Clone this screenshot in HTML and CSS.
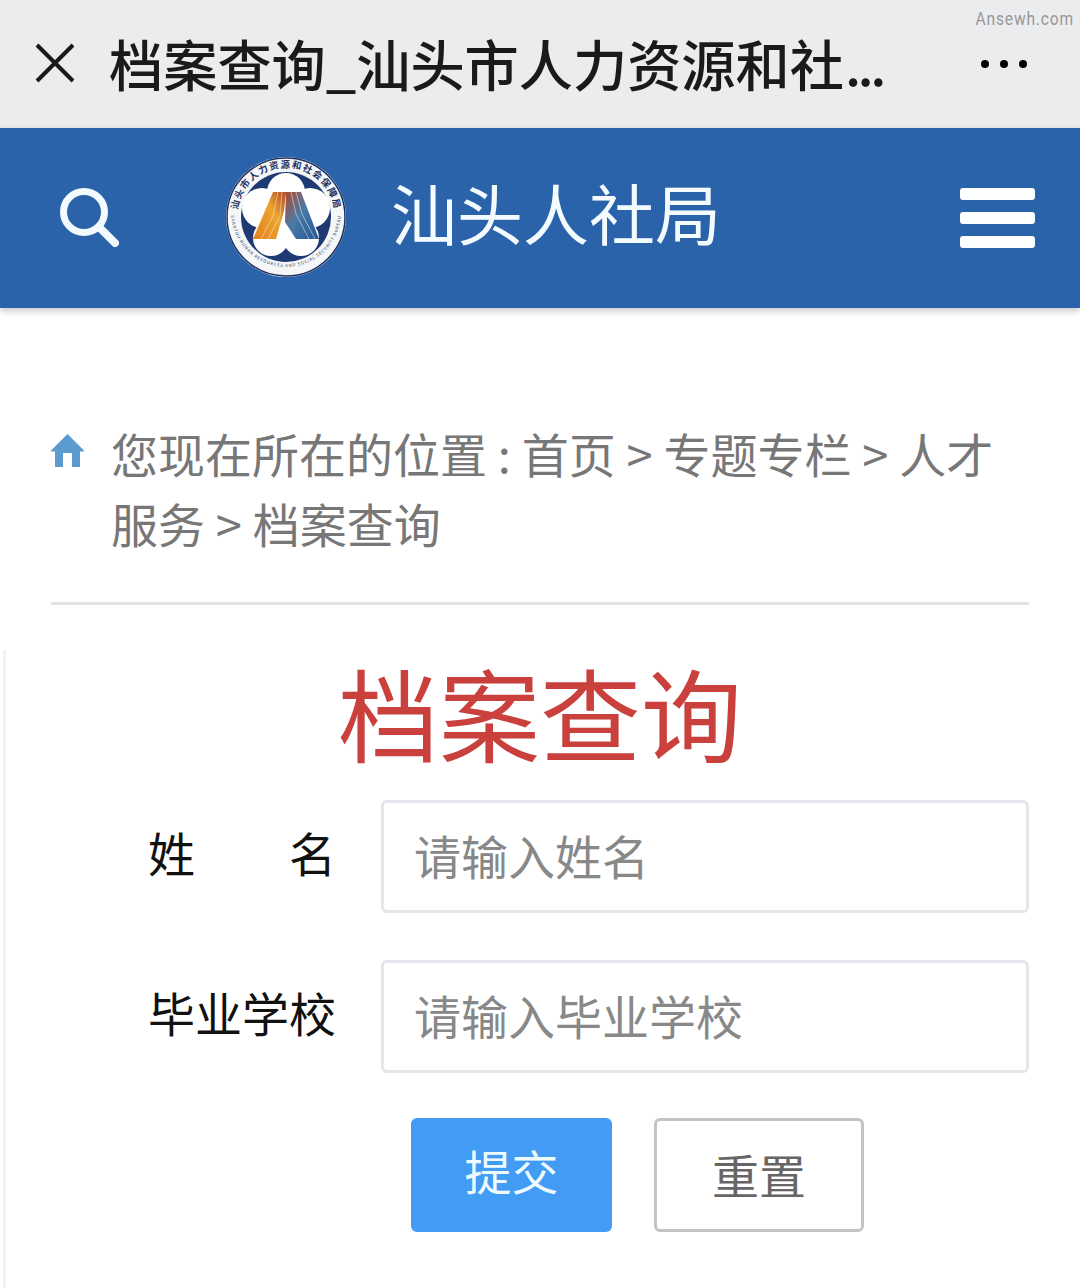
FILE: index.html
```html
<!DOCTYPE html>
<html lang="zh-CN">
<head>
<meta charset="utf-8">
<title>档案查询</title>
<link rel="stylesheet" href="styles.css">
</head>
<body>
<div class="wx-bar">
  <svg class="wx-close" width="40" height="40" viewBox="0 0 40 40"><path d="M2 2 L38 38 M38 2 L2 38" stroke="#1a1a1a" stroke-width="4" fill="none"/></svg>
  <div class="wx-title">档案查询_汕头市人力资源和社<span class="ell">...</span></div>
  <div class="wx-more"><i></i><i></i><i></i></div>
  <div class="watermark">Ansewh.com</div>
</div>
<header class="site-head">
  <svg class="search" width="60" height="60" viewBox="0 0 60 60"><circle cx="25" cy="25" r="20.5" stroke="#f4fbff" stroke-width="7" fill="none"/><path d="M41 41 L56 56" stroke="#f4fbff" stroke-width="8" stroke-linecap="round"/></svg>
  <div class="brand">
    <svg class="logo" width="122" height="122" viewBox="0 0 122 122">
      <defs>
        <path id="arcTop" d="M14 72 A48.5 48.5 0 1 1 108 72"/>
        <path id="arcBot" d="M6 56 A55 55 0 0 0 116 56"/>
        <linearGradient id="lg" x1="0" y1="1" x2="1" y2="0"><stop offset="0" stop-color="#e2811d"/><stop offset=".6" stop-color="#eba52f"/><stop offset="1" stop-color="#b24a2a"/></linearGradient>
        <linearGradient id="rg" x1="0" y1="0" x2="1" y2="1"><stop offset="0" stop-color="#b24a2a"/><stop offset=".45" stop-color="#4a7aa8"/><stop offset="1" stop-color="#245592"/></linearGradient>
      </defs>
      <circle cx="61" cy="61" r="60" fill="#f4f6f8"/>
      <circle cx="61" cy="61" r="59" fill="none" stroke="#1d2f5c" stroke-width="1.5"/>
      <circle cx="61" cy="61" r="45" fill="#1f3a72"/>
      <g fill="#fff">
        <circle cx="61" cy="61" r="27"/>
        <circle cx="61" cy="36" r="19"/>
        <circle cx="37" cy="52" r="20"/>
        <circle cx="85" cy="52" r="20"/>
        <circle cx="46" cy="82" r="18"/>
        <circle cx="76" cy="82" r="18"/>
      </g>
      <path d="M48 36 L61 36 L59 55 L51 83 L28 83 Z" fill="url(#lg)"/>
      <path d="M61 36 L76 36 L94 83 L71 83 L60 66 Z" fill="url(#rg)"/>
      <path d="M53 36 L48 60 L36 83 M57 36 L55 60 L43 83" stroke="#fff" stroke-width=".8" fill="none" opacity=".55"/>
      <path d="M66 36 L71 58 L84 83 M71 36 L77 58 L90 83" stroke="#fff" stroke-width=".8" fill="none" opacity=".6"/>
      <text class="logo-cn"><textPath href="#arcTop" startOffset="50%" text-anchor="middle">汕头市人力资源和社会保障局</textPath></text>
      <text class="logo-en"><textPath href="#arcBot" startOffset="50%" text-anchor="middle">SHANTOU HUMAN RESOURCES AND SOCIAL SECURITY BUREAU</textPath></text>
    </svg>
    <div class="brand-name">汕头人社局</div>
  </div>
  <div class="burger"><i></i><i></i><i></i></div>
</header>
<main class="content">
  <nav class="crumb">
    <svg class="home" width="33" height="33" viewBox="0 0 33 33"><path d="M16.5 0 L33 16.5 L33 17.5 L29 17.5 L29 33 L21 33 L21 19 L12 19 L12 33 L4 33 L4 17.5 L0 17.5 L0 16.5 Z" fill="#5b9bd0"/></svg>
    <p class="crumb-text">您现在所在的位置 : 首页 &gt; 专题专栏 &gt; 人才服务 &gt; 档案查询</p>
  </nav>
  <section class="panel">
    <h1 class="page-title">档案查询</h1>
    <form class="query">
      <div class="row">
        <label class="lab lab-split"><span>姓</span><span>名</span></label>
        <div class="field">请输入姓名</div>
      </div>
      <div class="row">
        <label class="lab">毕业学校</label>
        <div class="field">请输入毕业学校</div>
      </div>
      <div class="actions">
        <div class="btn primary">提交</div>
        <div class="btn ghost">重置</div>
      </div>
    </form>
  </section>
</main>
</body>
</html>
```
FILE: styles.css
```css
* { box-sizing: border-box; }
html, body { margin: 0; padding: 0; }
body {
  width: 1080px;
  height: 1288px;
  overflow: hidden;
  background: #fff;
  font-family: "Noto Sans CJK SC", "Noto Sans", sans-serif;
}
.wx-bar {
  position: relative;
  height: 128px;
  background: #ebecee;
  display: flex;
  align-items: center;
  padding-left: 35px;
}
.wx-close { flex: none; margin-right: 34px; margin-top: -2px; }
.wx-title {
  font-size: 54.2px;
  font-weight: 500;
  line-height: 80px;
  color: #1a1a1a;
  white-space: nowrap;
  width: 780px;
  margin-top: -3px;
}
.ell { letter-spacing: -3.5px; margin-left: 1px; }
.wx-more { display: flex; gap: 11px; margin-left: 92px; margin-top: -1px; }
.wx-more i { width: 8px; height: 8px; border-radius: 50%; background: #000; display: block; }
.watermark {
  position: absolute;
  top: 8px;
  right: 6px;
  font-family: Roboto, sans-serif;
  font-size: 19px;
  line-height: 22px;
  letter-spacing: 1px;
  color: #96979a;
  transform: scaleX(.82);
  transform-origin: right center;
}
.site-head {
  height: 180px;
  background: #2b63aa;
  box-shadow: 0 3px 7px rgba(0,0,0,.22);
  display: flex;
  align-items: center;
  position: relative;
}
.search { flex: none; margin-left: 59px; margin-top: -2px; }
.brand { display: flex; align-items: center; margin-left: 106px; }
.logo { flex: none; margin-top: -2px; }
.logo-cn { font-size: 9.4px; font-weight: 700; letter-spacing: 1.4px; fill: #1d2f5c; }
.logo-en { font-size: 4.2px; letter-spacing: .85px; fill: #2b3a66; }
.brand-name {
  font-size: 66px;
  font-weight: 400;
  line-height: 80px;
  color: #f4fbff;
  margin-left: 44px;
  white-space: nowrap;
  margin-top: -15px;
}
.burger {
  margin-left: auto;
  margin-right: 45px;
  width: 75px;
  display: flex;
  flex-direction: column;
  gap: 12px;
}
.burger i { display: block; height: 12px; border-radius: 3px; background: #fdfeff; }
.crumb {
  margin: 110px 51px 0;
  padding-bottom: 44px;
  border-bottom: 3px solid #e2e3e5;
  display: flex;
  align-items: flex-start;
}
.home { flex: none; margin-top: 16px; margin-right: 27px; }
.crumb-text {
  margin: 0;
  font-size: 47px;
  font-weight: 400;
  line-height: 70px;
  word-spacing: .3px;
  color: #777;
}
.panel {
  display: flow-root;
  margin: 45px 0 0 3px;
  height: 638px;
  border-left: 3px solid #f3f3f3;
  padding-right: 6px;
}
.page-title {
  margin: -9px 0 0;
  text-align: center;
  font-size: 101px;
  font-weight: 400;
  line-height: 140px;
  color: #c9403c;
}
.query { margin-top: 19px; }
.row { display: flex; align-items: center; height: 113px; margin-bottom: 47px; }
.row + .row { margin-bottom: 45px; }
.lab {
  width: 188px;
  margin-left: 142px;
  margin-right: 45px;
  font-size: 47px;
  line-height: 60px;
  color: #111;
  flex: none;
  white-space: nowrap;
  margin-top: -10px;
}
.lab-split { display: flex; justify-content: space-between; }
.field {
  width: 648px;
  height: 113px;
  border: 3px solid #e4e6ec;
  border-radius: 6px;
  padding-left: 30px;
  font-size: 47px;
  font-weight: 400;
  line-height: 103px;
  color: #888;
}
.actions { display: flex; margin-left: 405px; gap: 42px; }
.btn {
  height: 114px;
  border-radius: 6px;
  font-size: 47px;
  text-align: center;
}
.primary { width: 201px; background: #429cf4; color: #effaff; font-weight: 400; line-height: 104px; }
.ghost { width: 210px; border: 3px solid #c4c4c4; color: #666; font-weight: 400; line-height: 106px; }
```
